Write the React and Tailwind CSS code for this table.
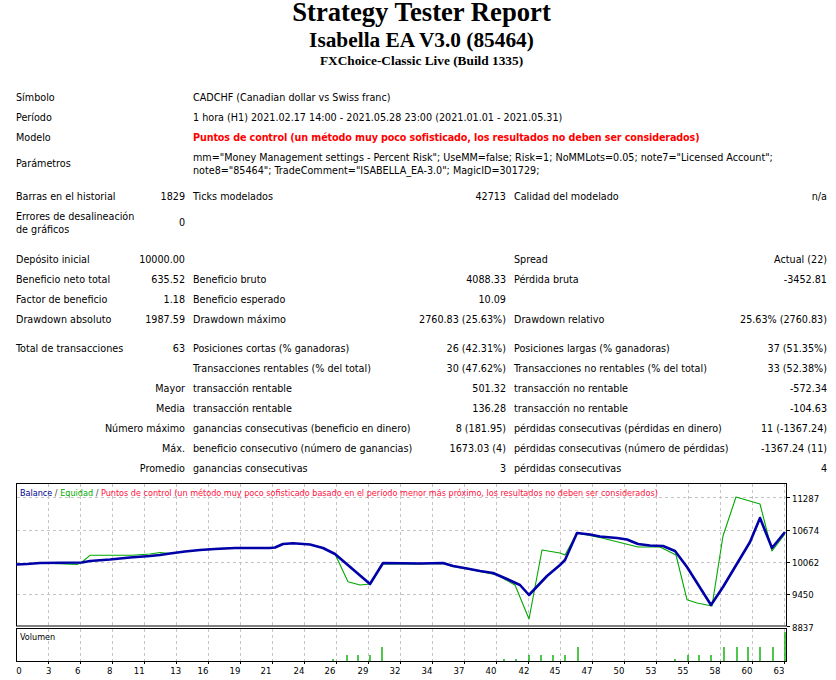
import React from "react";

const FONT = "font-['DejaVu_Sans_Condensed','Liberation_Sans',sans-serif]";
const SVG_FONT = "'DejaVu Sans Condensed', 'Liberation Sans', sans-serif";

// balance (blue) and equity (green) curves, in page pixels
const balance = [
  [16, 563.5], [27, 563], [40, 562], [82, 561.5], [90, 560], [110, 558.5], [130, 556.5],
  [150, 555], [160, 554], [170, 552.5], [185, 550.5], [200, 549], [215, 548], [235, 547],
  [270, 547], [275, 546.5], [283, 543], [293, 542.3], [310, 543.5], [323, 547], [335, 553],
  [370, 583], [383, 562], [420, 562.5], [443, 562], [453, 565], [467, 567.5], [480, 570],
  [493, 572], [507, 578], [520, 584], [529, 594], [547, 575], [560, 564], [565, 559],
  [577, 532], [590, 533.5], [600, 535.5], [617, 537], [627, 538.5], [638, 543], [650, 544.5],
  [663, 545], [675, 550], [687, 566], [711, 604], [723, 586], [750, 541], [760, 517],
  [772, 547], [785, 531],
];

const equity = [
  [16, 563.5], [27, 563], [40, 562], [77, 563.5], [82, 561], [90, 554.3], [132, 554.3],
  [150, 553], [160, 551.5], [170, 552.5], [185, 550.5], [200, 549], [215, 547.5], [235, 547],
  [270, 547], [275, 546.5], [283, 543], [293, 542.3], [310, 543.5], [323, 547], [335, 553],
  [348, 580.7], [360, 584], [370, 583], [383, 563], [420, 563], [443, 562.5], [453, 565.5],
  [467, 568], [480, 570.5], [497, 574], [515, 584], [529, 618], [542, 549], [560, 552],
  [565, 554], [577, 532], [602, 537], [638, 546], [660, 546], [676, 554], [687, 598.7],
  [697, 602], [712, 605], [723, 535], [736, 496], [760, 503], [772, 550], [785, 533],
];

const volume = [
  [333, 658], [347, 654], [358, 654], [370, 654], [382, 646], [504, 658], [516, 658],
  [529, 654], [541, 654], [553, 654], [565, 654], [578, 646], [675, 658], [688, 654],
  [699, 654], [711, 654], [724, 646], [737, 646], [748, 646], [760, 646], [773, 646], [785, 631],
];

const xLabels = [
  [0, 19], [3, 48.7], [6, 77.7], [8, 109.7], [11, 139.3], [13, 175.7], [16, 203], [19, 235],
  [21, 266], [24, 299], [26, 330], [29, 363], [32, 395], [34, 427], [37, 459], [40, 491],
  [42, 524], [45, 555], [47, 587], [50, 619], [53, 651], [55, 683], [58, 715], [60, 747], [63, 779],
];

const yLabels = [
  ["11287", 496.4], ["10674", 528.6], ["10062", 560.8], ["9450", 593], ["8837", 625.2],
];

const pts = (arr) => arr.map(([x, y]) => `${x},${y}`).join(" ");

const gridX = Array.from({ length: 24 }, (_, i) => 48 + i * 32);

function Chart() {
  return (
    <svg width="836" height="202" viewBox="0 478 836 202" className="block">
      {/* main panel */}
      <rect x="16.5" y="482.5" width="770" height="142.5" fill="#fff" stroke="#000" />
      {gridX.map((x) => (
        <line key={"gm" + x} x1={x + 0.5} y1="483" x2={x + 0.5} y2="624.5" stroke="#c4c4c4" strokeDasharray="3 3" />
      ))}
      {yLabels.slice(0, 4).map(([, y]) => (
        <line key={"gh" + y} x1="17" y1={Math.round(y) + 0.5} x2="786" y2={Math.round(y) + 0.5} stroke="#c4c4c4" strokeDasharray="3 3" />
      ))}

      {/* volume panel */}
      <rect x="16.5" y="627.5" width="770" height="33" fill="#fff" stroke="#000" />
      {gridX.map((x) => (
        <line key={"gv" + x} x1={x + 0.5} y1="628" x2={x + 0.5} y2="660" stroke="#c4c4c4" strokeDasharray="3 3" />
      ))}
      {volume.map(([x, y]) => (
        <line key={"v" + x} x1={x} y1={y} x2={x} y2="660" stroke="#00b000" strokeWidth="1.4" />
      ))}

      {/* curves */}
      <polyline points={pts(equity)} fill="none" stroke="#00a800" strokeWidth="1.1" strokeLinejoin="round" />
      <polyline points={pts(balance)} fill="none" stroke="#0000a8" strokeWidth="2.6" strokeLinejoin="round" />

      {/* legend */}
      <text x="20" y="491.5" dominantBaseline="central" fontSize="9" fontFamily={SVG_FONT}>
        <tspan fill="#000090">Balance</tspan>
        <tspan fill="#404040"> / </tspan>
        <tspan fill="#00a800">Equidad</tspan>
        <tspan fill="#404040"> / </tspan>
        <tspan fill="#ff1040">
          Puntos de control (un método muy poco sofisticado basado en el período menor más próximo, los resultados no deben ser considerados)
        </tspan>
      </text>
      <text x="20" y="635.7" dominantBaseline="central" fontSize="9" fontFamily={SVG_FONT} fill="#000">
        Volumen
      </text>

      {/* y axis */}
      {yLabels.map(([t, y]) => (
        <g key={t}>
          <line x1="787" y1={Math.round(y) + 0.5} x2="790" y2={Math.round(y) + 0.5} stroke="#000" />
          <text x="792" y={y + 0.8} dominantBaseline="central" fontSize="9.5" fontFamily={SVG_FONT} fill="#000">
            {t}
          </text>
        </g>
      ))}

      {/* x axis */}
      {gridX.map((x) => (
        <line key={"t" + x} x1={x + 0.5} y1="661" x2={x + 0.5} y2="663" stroke="#000" />
      ))}
      {xLabels.map(([t, x]) => (
        <text key={t} x={x} y="669.5" textAnchor="middle" dominantBaseline="central" fontSize="9.5" fontFamily={SVG_FONT} fill="#000">
          {t}
        </text>
      ))}
    </svg>
  );
}

const L = ({ children, span = "", h = "h-5" }) => (
  <div className={`${h} ${span} flex items-center whitespace-nowrap`}>{children}</div>
);

const V = ({ children, span = "", h = "h-5" }) => (
  <div className={`${h} ${span} flex items-center justify-end whitespace-nowrap`}>{children}</div>
);

export default function App() {
  return (
    <div className={`w-[836px] h-[680px] bg-white text-black overflow-hidden ${FONT}`}>
      {/* headings */}
      <div className="pl-[7px] text-center font-['Liberation_Serif',serif] font-bold">
        <div className="text-[26.67px] leading-[24px]">Strategy Tester Report</div>
        <div className="mt-[3px] text-[21.33px] leading-[26px]">Isabella EA V3.0 (85464)</div>
        <div className="text-[13.33px] leading-[16px]">FXChoice-Classic Live (Build 1335)</div>
      </div>

      {/* report table */}
      <div className="mt-[19px] ml-[16px] grid grid-cols-[118px_43px_210px_95px_210px_95px] gap-x-2 text-[10.7px]">
        <L span="col-span-2">Símbolo</L>
        <L span="col-span-4">CADCHF (Canadian dollar vs Swiss franc)</L>

        <L span="col-span-2">Período</L>
        <L span="col-span-4">1 hora (H1) 2021.02.17 14:00 - 2021.05.28 23:00 (2021.01.01 - 2021.05.31)</L>

        <L span="col-span-2">Modelo</L>
        <L span="col-span-4">
          <span className="font-bold tracking-[-0.12px] text-[#ff0000]">
            Puntos de control (un método muy poco sofisticado, los resultados no deben ser considerados)
          </span>
        </L>

        <L span="col-span-2" h="h-[32px]">Parámetros</L>
        <div className="col-span-4 h-[32px] flex items-center leading-[13.5px]">
          <div>
            mm="Money Management settings - Percent Risk"; UseMM=false; Risk=1; NoMMLots=0.05; note7="Licensed Account";
            note8="85464"; TradeComment="ISABELLA_EA-3.0"; MagicID=301729;
          </div>
        </div>

        <div className="col-span-6 h-[7px]" />

        <L>Barras en el historial</L>
        <V>1829</V>
        <L>Ticks modelados</L>
        <V>42713</V>
        <L>Calidad del modelado</L>
        <V>n/a</V>

        <div className="h-[32px] flex items-center leading-[13.5px] whitespace-nowrap">
          <div>
            Errores de desalineación
            <br />
            de gráficos
          </div>
        </div>
        <V h="h-[32px]">0</V>
        <div className="col-span-4" />

        <div className="col-span-6 h-[11px]" />

        <L>Depósito inicial</L>
        <V>10000.00</V>
        <div />
        <div />
        <L>Spread</L>
        <V>Actual (22)</V>

        <L>Beneficio neto total</L>
        <V>635.52</V>
        <L>Beneficio bruto</L>
        <V>4088.33</V>
        <L>Pérdida bruta</L>
        <V>-3452.81</V>

        <L>Factor de beneficio</L>
        <V>1.18</V>
        <L>Beneficio esperado</L>
        <V>10.09</V>
        <div />
        <div />

        <L>Drawdown absoluto</L>
        <V>1987.59</V>
        <L>Drawdown máximo</L>
        <V>2760.83 (25.63%)</V>
        <L>Drawdown relativo</L>
        <V>25.63% (2760.83)</V>

        <div className="col-span-6 h-[9px]" />

        <L>Total de transacciones</L>
        <V>63</V>
        <L>Posiciones cortas (% ganadoras)</L>
        <V>26 (42.31%)</V>
        <L>Posiciones largas (% ganadoras)</L>
        <V>37 (51.35%)</V>

        <div className="col-span-2" />
        <L>Transacciones rentables (% del total)</L>
        <V>30 (47.62%)</V>
        <L>Transacciones no rentables (% del total)</L>
        <V>33 (52.38%)</V>

        <V span="col-span-2">Mayor</V>
        <L>transacción rentable</L>
        <V>501.32</V>
        <L>transacción no rentable</L>
        <V>-572.34</V>

        <V span="col-span-2">Media</V>
        <L>transacción rentable</L>
        <V>136.28</V>
        <L>transacción no rentable</L>
        <V>-104.63</V>

        <V span="col-span-2">Número máximo</V>
        <L>ganancias consecutivas (beneficio en dinero)</L>
        <V>8 (181.95)</V>
        <L>pérdidas consecutivas (pérdidas en dinero)</L>
        <V>11 (-1367.24)</V>

        <V span="col-span-2">Máx.</V>
        <L>beneficio consecutivo (número de ganancias)</L>
        <V>1673.03 (4)</V>
        <L>pérdidas consecutivas (número de pérdidas)</L>
        <V>-1367.24 (11)</V>

        <V span="col-span-2">Promedio</V>
        <L>ganancias consecutivas</L>
        <V>3</V>
        <L>pérdidas consecutivas</L>
        <V>4</V>
      </div>

      <Chart />
    </div>
  );
}
